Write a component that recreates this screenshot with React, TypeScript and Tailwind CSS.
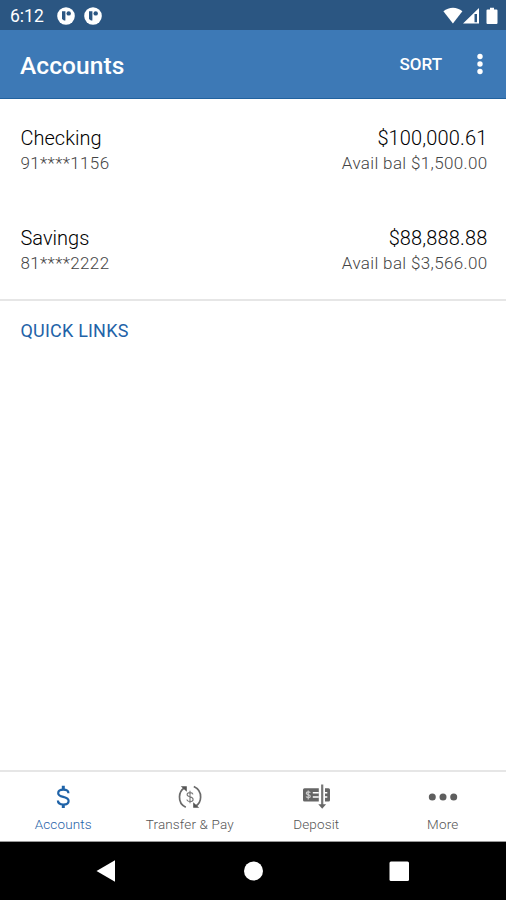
import type { ReactNode } from 'react';

type Account = {
  name: string;
  number: string;
  balance: string;
  available: string;
};

type Tab = {
  label: string;
  icon: ReactNode;
  active?: boolean;
};

const accounts: Account[] = [
  { name: 'Checking', number: '91****1156', balance: '$100,000.61', available: 'Avail bal $1,500.00' },
  { name: 'Savings', number: '81****2222', balance: '$88,888.88', available: 'Avail bal $3,566.00' },
];

const NotificationIcon = () => (
  <svg width="18" height="18" viewBox="0 0 18 18" aria-hidden="true">
    <circle cx="9" cy="9" r="8.8" fill="#fff" />
    <path d="M5 4.3h3.4v9.200H7L5 12z" fill="#2b5682" />
    <circle cx="11.700" cy="6.400" r="2.200" fill="#2b5682" />
  </svg>
);

const DollarIcon = () => (
  <svg width="16" height="24" viewBox="0 0 16 24" fill="none" stroke="#1f63a8" strokeWidth="2.200" aria-hidden="true">
    <path d="M8.300 .8v4M8.300 19v4" strokeWidth="3" />
    <path d="M13.400 8.200C13.400 6 11.400 4.700 8.300 4.700 5.200 4.700 3.200 6 3.200 8.200c0 2.400 2.200 3 5 3.700 3.300.8 5.400 1.700 5.400 4 0 2.200-2.200 3.600-5.300 3.600-3.200 0-5.400-1.500-5.400-3.900" />
  </svg>
);

const TransferIcon = () => (
  <svg width="24" height="24" viewBox="0 0 24 24" fill="none" stroke="#6a6a6a" strokeWidth="1.700" aria-hidden="true">
    <path d="M7.800 22.300C3.600 20.300 1.300 16.500 1.500 11.800 1.600 8 3 5.300 5.800 3.300" />
    <path d="M15.800 1.400c4.600 2.100 7 6 6.800 10.800-.1 3.700-1.500 6.500-4.300 8.500" />
    <path d="M2.800 1.200h6v5.600zM21.200 22.800h-6v-5.600z" fill="#555" stroke="none" />
    <path d="M12 5.800v12.400M15 9.300c-.3-1.100-1.400-1.700-3-1.700s-2.900.7-2.900 2c0 1.500 1.400 1.900 2.900 2.300 1.800.5 3.100 1 3.100 2.500 0 1.300-1.300 2.100-3.100 2.100-1.700 0-2.900-.7-3.100-2" stroke="#777" strokeWidth="1.100" />
  </svg>
);

const DepositIcon = () => (
  <svg width="30" height="26" viewBox="0 0 30 26" aria-hidden="true">
    <path d="M3.500 4.300h14.300v13.200H3.500A1.500 1.500 0 0 1 2 16V5.800a1.500 1.500 0 0 1 1.500-1.500zM24 4.300h3.500A1.500 1.500 0 0 1 29 5.800V16a1.500 1.500 0 0 1-1.500 1.500H24z" fill="#666" />
    <path d="M11.800 8.800h6M11.800 13h6M24 8.800h2.300M24 13h2.300" stroke="#fff" strokeWidth="1.600" />
    <path d="M7.200 6.500v9M9.300 8.800c-.7-1.200-4-1.200-4 .5s4 1.100 4 2.900-3.500 1.800-4.200.3" stroke="#ccc" strokeWidth="1.200" fill="none" />
    <path d="M21.200 .5V21" stroke="#777" strokeWidth="2.200" />
    <path d="M17.300 20.300h7.800l-3.900 4.500z" fill="#666" />
  </svg>
);

const MoreIcon = () => (
  <svg width="30" height="8" viewBox="0 0 30 8" fill="#5e5e5e" aria-hidden="true">
    <circle cx="4.300" cy="4" r="3.500" />
    <circle cx="15" cy="4" r="3.500" />
    <circle cx="25.700" cy="4" r="3.500" />
  </svg>
);

const tabs: Tab[] = [
  { label: 'Accounts', icon: <DollarIcon />, active: true },
  { label: 'Transfer & Pay', icon: <TransferIcon /> },
  { label: 'Deposit', icon: <DepositIcon /> },
  { label: 'More', icon: <MoreIcon /> },
];

const StatusBar = () => (
  <div className="flex h-[30px] shrink-0 items-center justify-between bg-[#2b5682] pt-0.5 pr-[7px] pl-[10px] text-white">
    <div className="flex items-center">
      <span className="w-[47px] pt-px text-[17.5px] leading-none">6:12</span>
      <div className="flex gap-[9px]">
        <NotificationIcon />
        <NotificationIcon />
      </div>
    </div>
    <svg width="56" height="18" viewBox="0 0 56 18" fill="#fff" aria-hidden="true">
      <path d="M.4 4.300C6-.5 14-.5 19.400 4.300L9.900 16.500z" />
      <path fillRule="evenodd" d="M36 1v15.500H20zM31.500 7v8.200h2.500V7z" />
      <path d="M47 .8h4v1.700h2.500q1 0 1 1V16q0 1-1 1h-9q-1 0-1-1V3.500q0-1 1-1H47z" />
    </svg>
  </div>
);

const AppBar = () => (
  <header className="flex h-[69px] shrink-0 items-center border-b border-[#21629f] bg-[#3d79b6] pr-[23px] pl-5 text-white">
    <h1 className="flex-1 pt-1 text-[24.5px] leading-none font-medium tracking-[0.1px]">Accounts</h1>
    <button type="button" className="pt-px text-[17px] leading-none font-medium">
      SORT
    </button>
    <button type="button" aria-label="More options" className="ml-[35px]">
      <svg width="6" height="22" viewBox="0 0 6 22" fill="#fff">
        <circle cx="3" cy="3.500" r="2.700" />
        <circle cx="3" cy="11" r="2.700" />
        <circle cx="3" cy="18.500" r="2.700" />
      </svg>
    </button>
  </header>
);

const AccountRow = ({ account }: { account: Account }) => (
  <li className="flex h-[100px] justify-between pt-[26px] pr-[18.5px] pl-[20.5px]">
    <div>
      <p className="text-[20px] leading-[26px] font-light text-black">{account.name}</p>
      <p className="text-[17px] leading-6 font-light tracking-[0.35px] text-[#444]">{account.number}</p>
    </div>
    <div className="text-right">
      <p className="text-[20px] leading-[26px] font-light tracking-[0.15px] text-black">{account.balance}</p>
      <p className="text-[17px] leading-6 font-light tracking-[0.35px] text-[#444]">{account.available}</p>
    </div>
  </li>
);

const TabBar = () => (
  <nav className="grid h-[72px] shrink-0 grid-cols-4 border-t-2 border-b border-t-[#e6e6e6] border-b-[#999] bg-white">
    {tabs.map((tab) => (
      <button key={tab.label} type="button" className="flex flex-col items-center pt-3">
        <span className="flex h-[26px] items-center">{tab.icon}</span>
        <span
          className={
            tab.active
              ? 'mt-[5px] text-[13.5px] leading-[18px] font-light tracking-[0.15px] text-[#1f63a8]'
              : 'mt-[5px] text-[13.5px] leading-[18px] font-light tracking-[0.15px] text-[#555]'
          }
        >
          {tab.label}
        </span>
      </button>
    ))}
  </nav>
);

const SystemNav = () => (
  <div className="h-[58px] shrink-0 bg-black">
    <svg width="506" height="58" viewBox="0 0 506 58" fill="#fff" aria-hidden="true">
      <path d="M96.500 29l18.500-10.800v21.600z" />
      <circle cx="253.500" cy="29" r="9.500" />
      <rect x="389.500" y="19.500" width="19.500" height="19.500" rx="1.500" />
    </svg>
  </div>
);

const App = () => (
  <div className="flex h-[900px] w-[506px] flex-col overflow-hidden bg-white font-['Roboto',sans-serif]">
    <StatusBar />
    <AppBar />
    <main className="flex-1">
      <ul className="h-[202px] border-b-2 border-[#e6e6e6]">
        {accounts.map((account) => (
          <AccountRow key={account.number} account={account} />
        ))}
      </ul>
      <h2 className="px-[20.5px] pt-[18px] text-[18px] leading-6 font-normal tracking-[0.2px] text-[#1f63a8]">
        QUICK LINKS
      </h2>
    </main>
    <TabBar />
    <SystemNav />
  </div>
);

export default App;
